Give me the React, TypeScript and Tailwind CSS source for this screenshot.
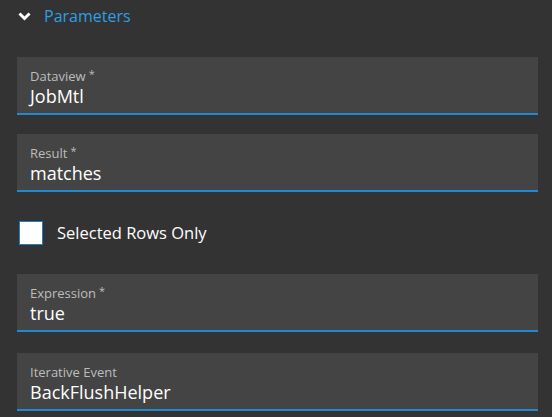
import { FC } from 'react';

type FieldProps = { label: string; value: string; required?: boolean };

const Field: FC<FieldProps> = ({ label, value, required }) => (
  <div className="bg-[#444444] border-b-2 border-[#1f8ad2] h-[58px] px-[13px] pt-[11px]">
    <div className="text-[13px] leading-[17px] text-[#bdbdbd]">
      {label}
      {required && <span className="ml-[3px] relative -top-[3px] text-[11px]">*</span>}
    </div>
    <div className="text-[18px] leading-[23px] font-medium text-white">{value}</div>
  </div>
);

export default function App() {
  return (
    <div className="w-[552px] h-[417px] bg-[#333333] overflow-hidden font-['Open_Sans',sans-serif]">
      <div className="flex items-center h-[32px] pl-[18px]">
        <svg width="13" height="9" viewBox="0 0 13 9" className="mr-[13px]">
          <path d="M1.5 1.5 L6.5 6.5 L11.5 1.5" fill="none" stroke="#ffffff" strokeWidth="3" />
        </svg>
        <span className="text-[16px] text-[#2f9ee4]">Parameters</span>
      </div>
      <div className="pl-[17px] pr-[14px] pt-[25px] flex flex-col">
        <Field label="Dataview" value="JobMtl" required />
        <div className="h-[19px]" />
        <Field label="Result" value="matches" required />
        <label className="flex items-center h-[82px] pl-[2px]">
          <span className="w-[24px] h-[24px] bg-white border border-[#1f7fc0] mr-[14px]" />
          <span className="text-[16.5px] font-medium text-white">Selected Rows Only</span>
        </label>
        <Field label="Expression" value="true" required />
        <div className="h-[21px]" />
        <Field label="Iterative Event" value="BackFlushHelper" />
      </div>
    </div>
  );
}
